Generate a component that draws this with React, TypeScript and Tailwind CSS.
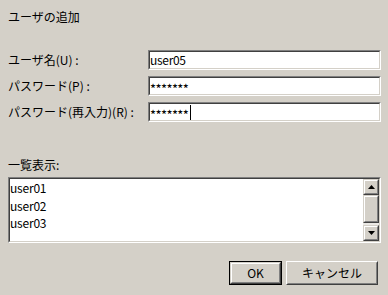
import React from "react";

// ── Win2k style bevels ───────────────────────────────────────────────────────

function Sunken({ className = "", children }: { className?: string; children?: React.ReactNode }) {
  return (
    <div className={`border border-t-[#808080] border-l-[#808080] border-r-white border-b-white ${className}`}>
      <div className="h-full border border-t-[#404040] border-l-[#404040] border-r-[#d4d0c8] border-b-[#d4d0c8] bg-white">
        {children}
      </div>
    </div>
  );
}

function Raised({ className = "", children }: { className?: string; children?: React.ReactNode }) {
  return (
    <div className={`border border-t-[#d4d0c8] border-l-[#d4d0c8] border-r-[#404040] border-b-[#404040] ${className}`}>
      <div className="h-full flex items-center justify-center border border-t-white border-l-white border-r-[#808080] border-b-[#808080] bg-[#d4d0c8]">
        {children}
      </div>
    </div>
  );
}

function Arrow({ up }: { up?: boolean }) {
  return (
    <svg width="7" height="4" viewBox="0 0 7 4" className="block">
      <polygon points={up ? "3.5,0 7,4 0,4" : "0,0 7,0 3.5,4"} fill="#000" />
    </svg>
  );
}

// ── Form row ─────────────────────────────────────────────────────────────────

function Row({ label, value, masked, caret }: { label: string; value: string; masked?: boolean; caret?: boolean }) {
  return (
    <div className="flex items-center h-[20px]">
      <div className="w-[140px] leading-[16px] whitespace-nowrap">{label}</div>
      <Sunken className="flex-1 h-[20px]">
        <div className="flex items-center h-full leading-[16px] tracking-[-0.3px]">
          {masked ? (
            <span className="relative top-[3px] tracking-[-0.6px] text-[13px]">{value}</span>
          ) : (
            <span>{value}</span>
          )}
          {caret && <span className="inline-block w-px h-[15px] bg-black ml-[2px]" />}
        </div>
      </Sunken>
    </div>
  );
}

export default function App() {
  return (
    <div className="w-[388px] h-[295px] bg-[#d4d0c8] text-black text-[12px] font-['Noto_Sans_CJK_JP','Noto_Sans',sans-serif] flex flex-col pl-2 pr-[7px] overflow-hidden">
      {/* Title */}
      <div className="mt-[9px] h-[16px] leading-[16px]">ユーザの追加</div>

      {/* Fields */}
      <div className="mt-[25px] flex flex-col gap-[6px]">
        <Row label="ユーザ名(U) :" value="user05" />
        <Row label="パスワード(P) :" value="*******" masked />
        <Row label="パスワード(再入力)(R) :" value="*******" masked caret />
      </div>

      {/* List */}
      <div className="mt-[35px] h-[16px] leading-[16px]">一覧表示:</div>
      <Sunken className="mt-[4px] h-[66px]">
        <div className="flex h-full">
          <div className="flex-1 leading-[17.5px] tracking-[-0.2px]">
            <div>user01</div>
            <div>user02</div>
            <div>user03</div>
          </div>
          <div className="w-[16px] flex flex-col">
            <Raised className="h-[16px]"><Arrow up /></Raised>
            <Raised className="h-[28px]" />
            <div className="flex-1 bg-[#ebe9e5]" />
            <Raised className="h-[16px]"><Arrow /></Raised>
          </div>
        </div>
      </Sunken>

      {/* Buttons */}
      <div className="mt-[18px] mr-[3px] flex justify-end gap-[4px]">
        <div className="w-[53px] h-[24px] border border-black">
          <Raised className="h-full">OK</Raised>
        </div>
        <div className="w-[92px] h-[24px] border border-t-white border-l-white border-r-[#404040] border-b-[#404040]">
          <div className="h-full flex items-center justify-center border border-t-[#d4d0c8] border-l-[#d4d0c8] border-r-[#808080] border-b-[#808080]">
            キャンセル
          </div>
        </div>
      </div>
    </div>
  );
}
